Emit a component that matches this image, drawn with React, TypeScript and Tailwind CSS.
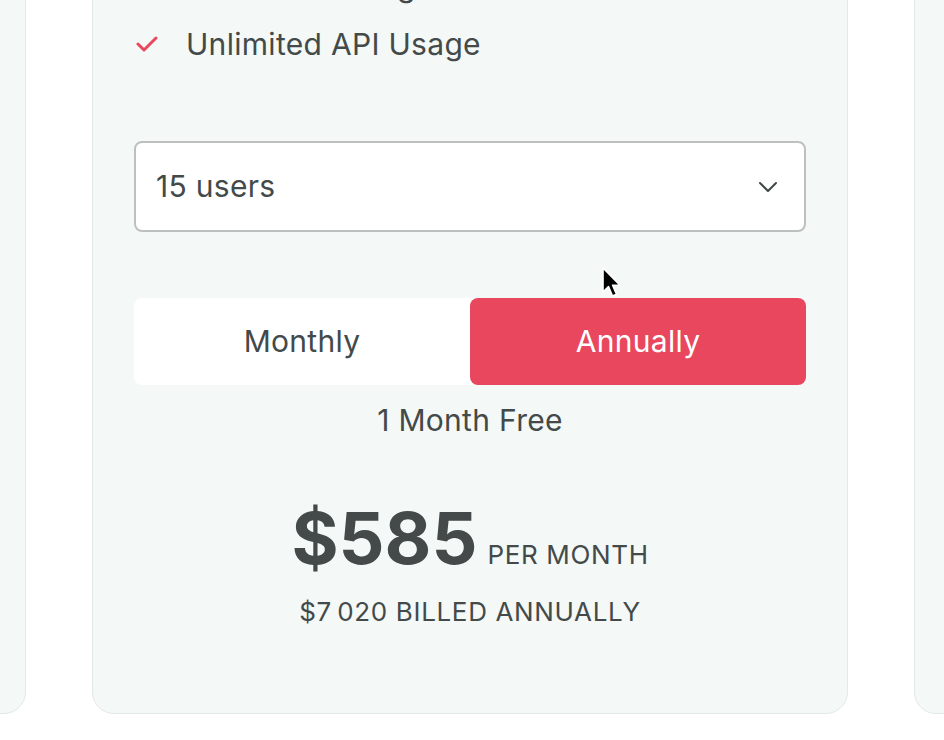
import { useState } from 'react'

const TEXT = 'text-[#434a49] tracking-[0.01em]'
const SMALL = 'text-[#434a49] text-[26px] tracking-[0.025em]'

function Check() {
  return (
    <svg width="22" height="16" viewBox="0 0 22 16" fill="none" className="shrink-0">
      <polyline points="2,8 8,14 20,2" stroke="#e8475e" strokeWidth="3" strokeLinecap="round" strokeLinejoin="round" />
    </svg>
  )
}

function Chevron() {
  return (
    <svg width="20" height="12" viewBox="0 0 20 12" fill="none">
      <polyline points="2,2 10,10 18,2" stroke="#3f4645" strokeWidth="2" strokeLinecap="round" strokeLinejoin="round" />
    </svg>
  )
}

function Cursor() {
  return (
    <svg width="22" height="34" viewBox="0 0 22 34" className="absolute left-[601px] top-[266px] pointer-events-none">
      <path
        d="M2 2 L2 26 L7.5 20.5 L11.5 30 L15.5 28.3 L11.6 19.2 L19 19.2 Z"
        fill="#000"
        stroke="#fff"
        strokeWidth="1.6"
        strokeLinejoin="round"
      />
    </svg>
  )
}

const FEATURES = ['Custom Routing', 'Unlimited API Usage']

export default function App() {
  const [billing, setBilling] = useState<'monthly' | 'annually'>('annually')

  return (
    <div
      className="relative w-[944px] h-[740px] overflow-hidden bg-white"
      style={{ fontFamily: 'Inter, "Noto Sans", sans-serif' }}
    >
      <div className="flex items-start gap-[66px] ml-[-730px]">
        <div className="w-[756px] h-[794px] mt-[-80px] shrink-0 rounded-[22px] bg-[#f4f8f7] border-[1.5px] border-[#e1eae7]" />

        <div className="w-[756px] shrink-0 mt-[-80px] rounded-[22px] bg-[#f4f8f7] border-[1.5px] border-[#e1eae7] px-[41px] pt-[36px] pb-[86px]">
          <ul>
            {FEATURES.map(f => (
              <li key={f} className="h-[58px] flex items-center gap-[28px] pl-[2px]">
                <Check />
                <span className={`text-[30px] ${TEXT}`}>{f}</span>
              </li>
            ))}
          </ul>

          <div className="mt-[68px] h-[91px] rounded-[8px] bg-white border-2 border-[#bcc1c0] flex items-center justify-between pl-[20px] pr-[26px]">
            <span className={`text-[30px] ${TEXT}`}>15 users</span>
            <Chevron />
          </div>

          <div className="mt-[66px] h-[87px] grid grid-cols-2 rounded-[8px] bg-white">
            <button
              onClick={() => setBilling('monthly')}
              className={`rounded-[8px] text-[30px] tracking-[0.01em] ${billing === 'monthly' ? 'bg-[#e8475e] text-white' : 'text-[#434a49]'}`}
            >
              Monthly
            </button>
            <button
              onClick={() => setBilling('annually')}
              className={`rounded-[8px] text-[30px] tracking-[0.01em] ${billing === 'annually' ? 'bg-[#e8475e] text-white' : 'text-[#434a49]'}`}
            >
              Annually
            </button>
          </div>

          <p className={`mt-[17px] text-center text-[30px] leading-[36px] ${TEXT}`}>1 Month Free</p>

          <div className="mt-[64px] flex items-baseline justify-center gap-[10px]">
            <span className="text-[72px] leading-none font-bold text-[#434a49]">$585</span>
            <span className={SMALL}>PER MONTH</span>
          </div>

          <p className={`mt-[23px] text-center leading-[30px] ${SMALL}`}>$7{'\u202F'}020 BILLED ANNUALLY</p>
        </div>

        <div className="w-[756px] h-[794px] mt-[-80px] shrink-0 rounded-[22px] bg-[#f4f8f7] border-[1.5px] border-[#e1eae7]" />
      </div>

      <Cursor />
    </div>
  )
}
